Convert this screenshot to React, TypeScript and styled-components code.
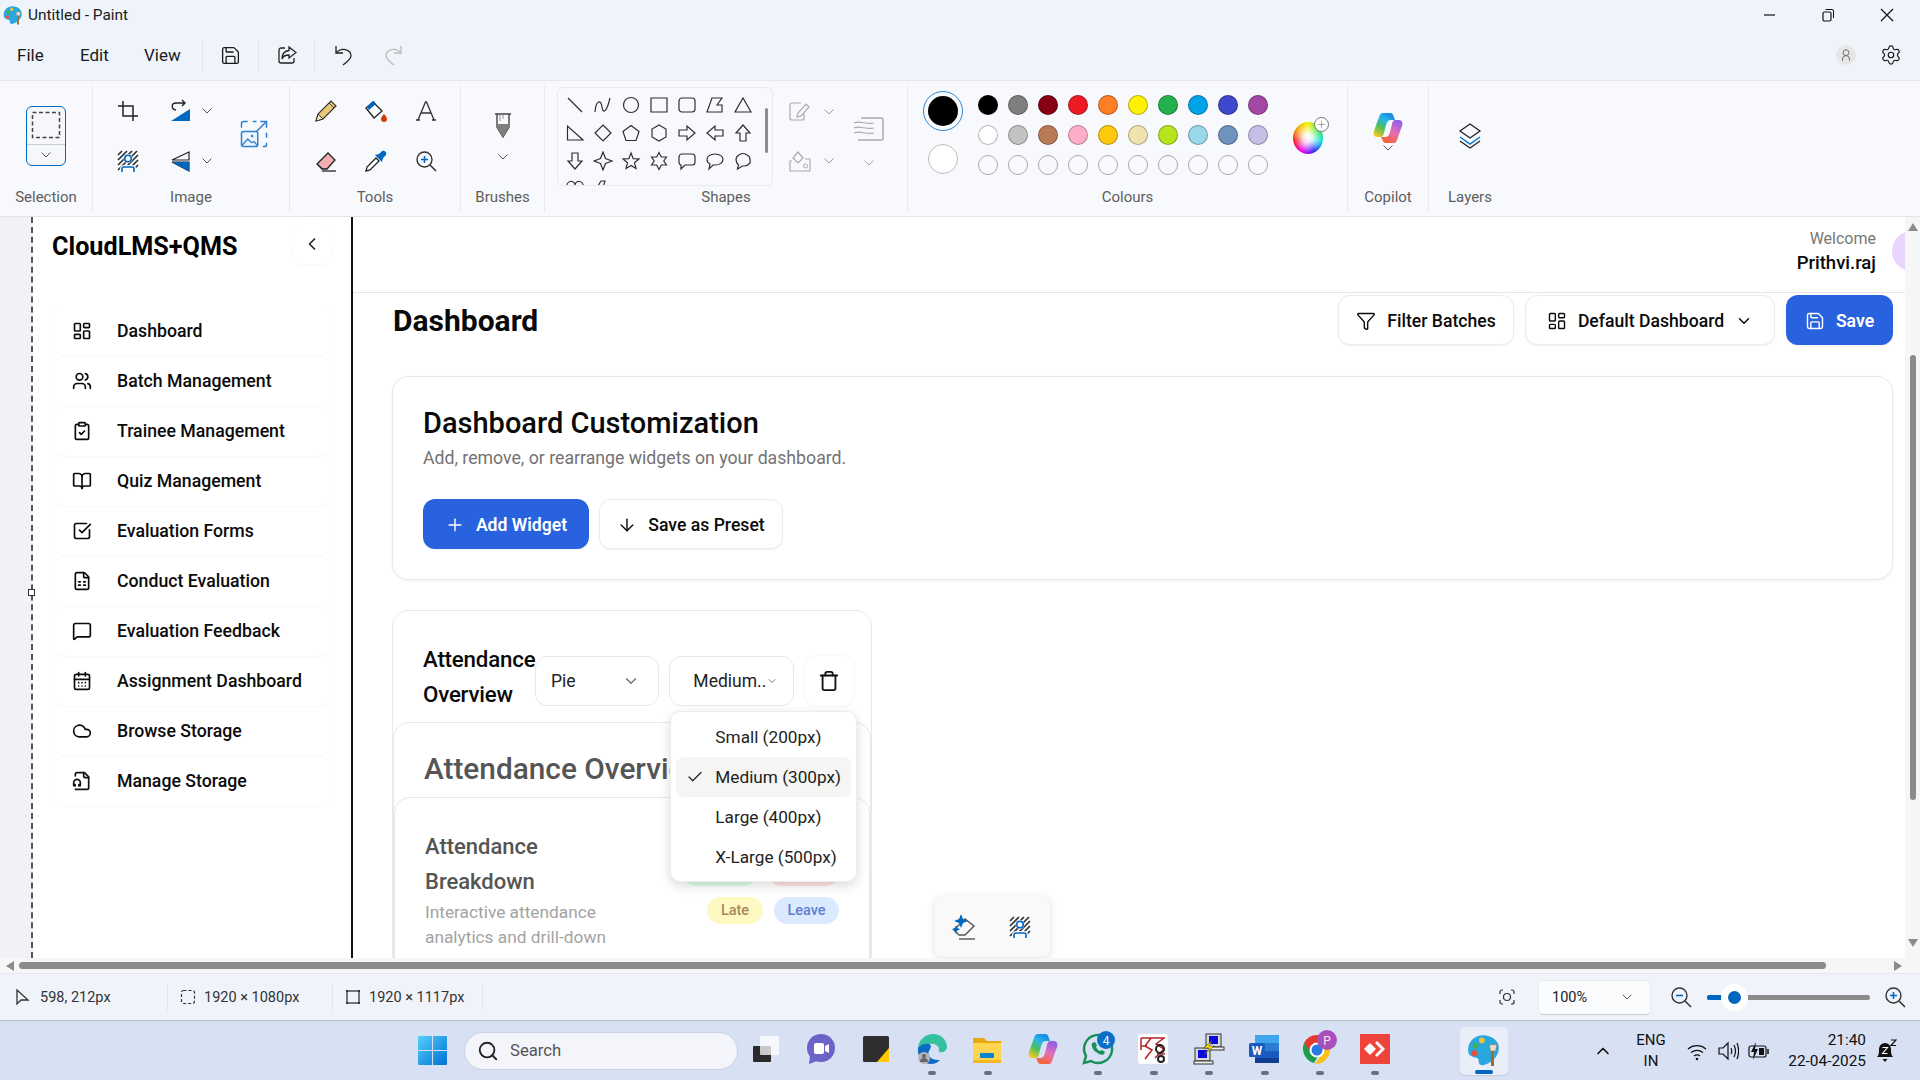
import React from 'react'
import styled, { createGlobalStyle } from 'styled-components'
import {
  ArrowDown, BookOpen, CalendarDays, Check, ChevronDown, ChevronLeft, ChevronUp, ClipboardCheck, Cloud,
  FileSpreadsheet, Funnel, LayoutDashboard, MessageSquare, Plus, Save, Search, Settings, SquareCheckBig, Trash, Users,
} from 'lucide-react'

const GlobalStyle = createGlobalStyle`
  html, body { margin: 0; padding: 0; width: 1920px; height: 1080px; overflow: hidden; background: #fff; }
  body { font-family: Roboto, "Noto Sans", sans-serif; color: #111; }
  * { box-sizing: border-box; }
  svg { display: block; flex-shrink: 0; }
`

/* ---------- window chrome ---------- */
const Window = styled.div`
  width: 1920px; height: 1080px; display: flex; flex-direction: column; overflow: hidden; background: #eff3fa;
`
const TitleBar = styled.div`
  height: 40px; flex-shrink: 0; display: flex; align-items: center; padding: 0 0 10px 3px; gap: 5px;
  font-size: 15.400px; color: #1a1a1a;
`
const WindowControls = styled.div`
  margin-left: auto; display: flex; align-items: center; padding-right: 25px; gap: 44px;
`
const MenuBar = styled.div`
  height: 40px; flex-shrink: 0; display: flex; align-items: center; padding: 0 18px 10px 17px;
  font-size: 17px; color: #1a1a1a;
`
const MenuItem = styled.span<{ $w: number }>`
  width: ${p => p.$w}px;
`
const MenuDivider = styled.div`
  width: 1px; height: 30px; background: #e0e3ea;
`
const MenuIcon = styled.div<{ $w: number }>`
  width: ${p => p.$w}px; display: flex; justify-content: center;
`
const MenuRight = styled.div`
  margin-left: auto; display: flex; align-items: center; gap: 24px;
`
const ProfileDot = styled.div`
  width: 20px; height: 20px; border-radius: 50%; background: #e6e6e6; display: flex; align-items: center; justify-content: center;
`

/* ---------- ribbon ---------- */
const Ribbon = styled.div`
  height: 137px; flex-shrink: 0; display: flex; background: #f8f9fd; border-top: 1px solid #e6e8ee; border-bottom: 1px solid #e3e5ea;
`
const Group = styled.div<{ $w: number; $last?: boolean }>`
  width: ${p => p.$w}px; height: 126px; margin-top: 5px; display: flex; flex-direction: column;
  border-right: ${p => (p.$last ? 'none' : '1px solid #e7e9ef')};
`
const GroupBody = styled.div<{ $top?: number; $left?: number; $center?: boolean }>`
  flex: 1; display: flex; padding-top: ${p => p.$top ?? 0}px; padding-left: ${p => p.$left ?? 0}px;
  ${p => (p.$center ? 'flex-direction: column; align-items: center;' : '')}
`
const GroupLabel = styled.div`
  height: 24px; text-align: center; font-size: 15px; color: #5e5e5e; line-height: 18px;
`
const SelectionTool = styled.div`
  width: 40px; height: 60px; margin-left: 26px; border: 1.5px solid #0067c0; border-radius: 6px; background: #f6f7fb;
  display: flex; flex-direction: column; align-items: center; padding-top: 4px;
`
const SelectionDivider = styled.div`
  width: 100%; height: 1px; background: #c8ccd4; margin: 5px 0 6px;
`
const ToolGrid = styled.div<{ $cols: string }>`
  display: grid; grid-template-columns: ${p => p.$cols}; grid-auto-rows: 50px;
`
const ToolCell = styled.div`
  display: flex; align-items: center; justify-content: center;
`
const SplitCell = styled.div`
  display: flex; align-items: center; padding-left: 20px; gap: 9px;
`
const ResizeTool = styled.div`
  margin: 33px 0 0 28px;
`
const BrushTool = styled.div`
  margin: 25px 0 14px;
`
const ShapesBox = styled.div`
  width: 216px; height: 99px; border: 1px solid #e8eaf0; border-radius: 6px; background: #f8f9fd; position: relative; overflow: hidden;
  display: grid; grid-template-columns: repeat(7, 28px); grid-auto-rows: 28px; padding: 3px 0 0 3px; align-content: start;
`
const ShapeCell = styled.div`
  display: flex; align-items: center; justify-content: center;
`
const ShapesThumb = styled.div`
  position: absolute; top: 20px; right: 4px; width: 3px; height: 45px; border-radius: 2px; background: #8b8b8b;
`
const OutlineColumn = styled.div`
  margin-left: 15px; display: flex; flex-direction: column; gap: 27px; padding-top: 14px;
`
const OutlineRow = styled.div`
  display: flex; align-items: center; gap: 11px; height: 22px;
`
const SizeColumn = styled.div`
  margin-left: 15px; width: 38px; display: flex; flex-direction: column; align-items: center; gap: 14px; padding-top: 26px;
`
const ActiveColumn = styled.div`
  width: 44px; margin: 0 8px 0 13px; display: flex; flex-direction: column; align-items: center; padding-top: 1px; gap: 13px;
`
const PrimaryRing = styled.div`
  width: 40px; height: 40px; border: 1.5px solid #2f86d6; border-radius: 50%; display: flex; align-items: center; justify-content: center;
`
const PrimaryDot = styled.div`
  width: 30px; height: 30px; border-radius: 50%; background: #000;
`
const SecondaryDot = styled.div`
  width: 30px; height: 30px; border-radius: 50%; background: #fff; border: 1.5px solid #bdbdbd;
`
const SwatchGrid = styled.div`
  display: grid; grid-template-columns: repeat(10, 30px); grid-auto-rows: 30px;
`
const SwatchCell = styled.div`
  display: flex; align-items: center; justify-content: center;
`
const Swatch = styled.div<{ $color?: string }>`
  width: 20px; height: 20px; border-radius: 50%; background: ${p => p.$color ?? 'transparent'};
  border: 1px solid ${p => (p.$color ? 'rgba(0,0,0,.28)' : '#a9a9a9')};
`
const WheelDisc = styled.div`
  position: relative; width: 30px; height: 32px; margin: 32px 0 0 20px; border-radius: 50%;
  background:
    radial-gradient(circle, #fff 0%, rgba(255,255,255,.85) 22%, rgba(255,255,255,0) 68%),
    conic-gradient(#f5f500, #2fe02f, #00e0e0, #2a2af5, #f000f0, #f51010, #f5a000, #f5f500);
`
const WheelPlus = styled.div`
  position: absolute; right: -6px; top: -5px; width: 15px; height: 15px; border-radius: 50%; background: #fff; border: 1px solid #777;
  display: flex; align-items: center; justify-content: center;
`

/* ---------- canvas ---------- */
const CanvasArea = styled.div`
  height: 741px; flex-shrink: 0; display: flex; position: relative; overflow: hidden; background: #fff;
`
const Gutter = styled.div`
  width: 33px; flex-shrink: 0; background: #f0f2f8; border-right: 2px dashed #555;
`
const Handle = styled.div`
  position: absolute; left: 28px; top: 372px; width: 7px; height: 7px; background: #fff; border: 1px solid #333;
`
const Sidebar = styled.aside`
  width: 320px; flex-shrink: 0; background: #fff; border-right: 2px solid #111; padding: 7px 19px 0 19px;
`
const BrandRow = styled.div`
  display: flex; align-items: center; justify-content: space-between; height: 40px; margin-bottom: 42px;
`
const Brand = styled.div`
  font-size: 25.200px; font-weight: 700; color: #000; padding-top: 4px;
`
const CollapseButton = styled.div`
  width: 40px; height: 40px; border-radius: 12px; display: flex; align-items: center; justify-content: center;
  box-shadow: 0 1px 3px rgba(0,0,0,.04); color: #222;
`
const NavItem = styled.div`
  height: 50px; border-radius: 14px; display: flex; align-items: center; padding-left: 20px; gap: 25px;
  font-size: 17.700px; font-weight: 500; color: #0b0b0b; box-shadow: 0 1px 2px rgba(0,0,0,.03), 0 0 1px rgba(0,0,0,.03);
`
const Main = styled.main`
  flex: 1; min-width: 0; overflow: hidden; background: #fff;
`
const Header = styled.header`
  height: 76px; border-bottom: 1px solid #e5e5e5; display: flex; align-items: center; justify-content: flex-end; gap: 16px;
  padding-bottom: 7px;
`
const Welcome = styled.div`
  text-align: right;
`
const WelcomeLabel = styled.div`
  font-size: 16px; color: #777; line-height: 24px;
`
const WelcomeName = styled.div`
  font-size: 18.500px; font-weight: 500; color: #0b0b0b; line-height: 25px;
`
const Avatar = styled.div`
  width: 40px; height: 40px; border-radius: 50%; background: #e9d5ff; margin-right: -27px; flex-shrink: 0;
`
const Content = styled.div`
  padding: 2px 12px 0 39px;
`
const PageHead = styled.div`
  display: flex; align-items: center; gap: 11px; height: 50px; margin-bottom: 31px;
`
const PageTitle = styled.h1`
  margin: 0 auto 0 1px; font-size: 30px; font-weight: 700; color: #0a0a0a;
`
const Button = styled.div<{ $primary?: boolean; $w: number }>`
  width: ${p => p.$w}px; height: 50px; border-radius: 12px; display: flex; align-items: center; justify-content: center; gap: 11px;
  padding-top: 1px; font-size: 17.600px; font-weight: ${p => (p.$primary ? 600 : 500)};
  background: ${p => (p.$primary ? '#2962de' : '#fff')}; color: ${p => (p.$primary ? '#fff' : '#0b0b0b')};
  border: ${p => (p.$primary ? 'none' : '1px solid #ececec')};
  box-shadow: 0 1px 2px rgba(0,0,0,.06);
`
const Card = styled.section`
  height: 204px; border: 1px solid #e8e8e8; border-radius: 16px; padding: 26px 30px 0; margin-bottom: 30px; box-shadow: 0 1px 3px rgba(0,0,0,.05);
`
const CardTitle = styled.h2`
  margin: 0; font-size: 29px; font-weight: 500; line-height: 40px; color: #0a0a0a;
`
const CardSub = styled.p`
  margin: 0 0 26px; font-size: 17.700px; line-height: 30px; color: #737373;
`
const ButtonRow = styled.div`
  display: flex; gap: 10px;
`
const Widget = styled.section`
  width: 480px; border: 1px solid #e8e8e8; border-radius: 16px;
`
const WidgetHead = styled.div`
  display: flex; align-items: center; padding: 31px 17px 0 30px; margin-bottom: 10px;
`
const WidgetTitle = styled.h3`
  margin: 0; width: 112px; font-size: 22.300px; font-weight: 500; line-height: 35px; color: #0a0a0a; letter-spacing: -.2px;
`
const SelectBox = styled.div<{ $center?: boolean }>`
  position: relative; width: 125px; height: 50px; border: 1px solid #e8e8e8; border-radius: 12px; margin: 8px 10px 0 0;
  display: flex; align-items: center; justify-content: space-between;
  padding: ${p => (p.$center ? '0 17px 0 23px' : '0 18px 0 15px')}; font-size: 17.500px; color: #222;
`
const Dropdown = styled.div`
  position: absolute; left: 0; top: 54px; width: 187px; height: 171px; z-index: 5; background: #fff; border: 1px solid #ececec; border-radius: 10px;
  box-shadow: 0 4px 12px rgba(0,0,0,.14); padding: 5px; color: #222;
`
const DropdownItem = styled.div<{ $active?: boolean }>`
  height: 40px; border-radius: 8px; display: flex; align-items: center; position: relative; padding-left: 39px; font-size: 17.200px;
  background: ${p => (p.$active ? '#f5f5f4' : 'transparent')};
`
const DropdownCheck = styled.span`
  position: absolute; left: 10px; top: 11px;
`
const TrashButton = styled.div`
  width: 50px; height: 50px; margin-top: 8px; border-radius: 12px; display: flex; align-items: center; justify-content: center; box-shadow: 0 0 2px rgba(0,0,0,.1);
`
const InnerCard = styled.div`
  border: 1px solid #e8e8e8; border-radius: 16px; padding: 26px 0 0 0; height: 400px;
`
const InnerTitle = styled.h3`
  margin: 0 0 8px 30px; font-size: 29.800px; font-weight: 500; line-height: 40px; color: #555;
`
const BreakdownCard = styled.div`
  border: 1px solid #e8e8e8; border-radius: 16px; padding: 31px 30px 0 30px; display: flex; justify-content: space-between; height: 300px;
`
const BreakdownCopy = styled.div`
  width: 210px;
`
const BreakdownTitle = styled.div`
  font-size: 22px; font-weight: 500; line-height: 35px; color: #555;
`
const BreakdownSub = styled.div`
  margin-top: 1px; font-size: 17.300px; line-height: 25px; color: #a3a3a3;
`
const PillWrap = styled.div`
  width: 165px; display: flex; flex-wrap: wrap; justify-content: flex-end; gap: 11px 11px; align-content: flex-start; padding-top: 30px;
`
const Pill = styled.span<{ $bg: string; $fg: string; $w: number }>`
  width: ${p => p.$w}px; height: 27px; border-radius: 14px; background: ${p => p.$bg}; color: ${p => p.$fg};
  display: flex; align-items: center; justify-content: center; font-size: 14.500px; font-weight: 500;
`
const FloatBar = styled.div`
  position: absolute; left: 935px; top: 679px; width: 115px; height: 61px; border-radius: 8px; background: #f9f9f9; z-index: 6;
  box-shadow: 0 2px 8px rgba(0,0,0,.13); display: flex; align-items: center; padding-left: 16px; gap: 29px;
`
const VBar = styled.div`
  width: 15px; flex-shrink: 0; background: #f6f6f6; display: flex; flex-direction: column; align-items: center; padding-top: 6px;
`
const VThumb = styled.div`
  width: 6px; height: 445px; border-radius: 3px; background: #8b8b8b; margin: 124px 0 139px;
`
const Triangle = styled.div<{ $dir: 'up' | 'down' | 'left' | 'right' }>`
  width: 0; height: 0; flex-shrink: 0;
  ${p => p.$dir === 'up' && 'border-left: 5px solid transparent; border-right: 5px solid transparent; border-bottom: 8px solid #8b8b8b;'}
  ${p => p.$dir === 'down' && 'border-left: 5px solid transparent; border-right: 5px solid transparent; border-top: 8px solid #8b8b8b;'}
  ${p => p.$dir === 'left' && 'border-top: 5px solid transparent; border-bottom: 5px solid transparent; border-right: 8px solid #8b8b8b;'}
  ${p => p.$dir === 'right' && 'border-top: 5px solid transparent; border-bottom: 5px solid transparent; border-left: 8px solid #8b8b8b;'}
`
const HBar = styled.div`
  height: 15px; flex-shrink: 0; background: #f6f6f6; display: flex; align-items: center; padding: 0 18px 0 6px;
`
const HThumb = styled.div`
  width: 1807px; height: 7px; border-radius: 4px; background: #8b8b8b; margin: 0 auto 0 5px;
`

/* ---------- status bar ---------- */
const StatusBar = styled.div`
  height: 48px; flex-shrink: 0; display: flex; align-items: center; padding: 0 14px 0 4px; background: #f0f3fa; border-top: 1px solid #e4e6ec;
  border-bottom: 1px solid #b4bccb; font-size: 14.500px; color: #333;
`
const StatusSeg = styled.div<{ $w: number }>`
  width: ${p => p.$w}px; height: 26px; display: flex; align-items: center; gap: 8px; padding-left: 12px; border-right: 1px solid #e0e3ea;
`
const StatusFirst = styled(StatusSeg)`
  gap: 10px; padding-left: 10px;
`
const StatusRight = styled.div`
  margin-left: auto; display: flex; align-items: center;
`
const ZoomCombo = styled.div`
  width: 113px; height: 35px; margin: 0 19px 0 21px; border-radius: 5px; background: #fbfcfe; border: 1px solid #e8eaf0; border-bottom-color: #c9ccd3;
  display: flex; align-items: center; justify-content: space-between; padding: 0 15px 0 13px; font-size: 14.500px; color: #222;
`
const Slider = styled.div`
  position: relative; width: 163px; height: 5px; margin: 0 14px 0 15px; border-radius: 3px; background: #8b8b8b;
`
const SliderFill = styled.div`
  position: absolute; left: 0; top: 0; height: 5px; width: 27px; border-radius: 3px; background: #0067c0;
`
const SliderThumb = styled.div`
  position: absolute; left: 14px; top: -11px; width: 27px; height: 27px; border-radius: 50%; background: #fff; display: flex; align-items: center; justify-content: center;
  &::after { content: ''; width: 13px; height: 13px; border-radius: 50%; background: #0067c0; }
`

/* ---------- taskbar ---------- */
const Taskbar = styled.div`
  flex: 1; min-height: 0; display: flex; align-items: center; background: #d8e1f3; padding-left: 418px;
`
const SearchBox = styled.div`
  width: 274px; height: 38px; margin-left: 17px; border-radius: 19px; background: #f3f5fb; border: 1px solid #c9d2e4;
  display: flex; align-items: center; padding-left: 12px; gap: 11px; font-size: 16.700px; color: #555;
`
const Tile = styled.div<{ $running?: boolean }>`
  width: 55.400px; height: 59px; position: relative; display: flex; align-items: center; justify-content: center; padding-bottom: 3px;
  &::after {
    content: ''; display: ${p => (p.$running ? 'block' : 'none')}; position: absolute; left: 24px; bottom: 5px; width: 8px; height: 4px; border-radius: 2px; background: #6b6f7a;
  }
`
const PaintTile = styled.div`
  width: 48px; height: 48px; margin-left: 57px; position: relative; border-radius: 5px; background: #e9eef9; box-shadow: 0 1px 1px rgba(0,0,0,.1);
  display: flex; align-items: center; justify-content: center; padding-bottom: 2px;
  &::after { content: ''; position: absolute; left: 15px; bottom: 1px; width: 18px; height: 4px; border-radius: 2px; background: #0067c0; }
`
const Tray = styled.div`
  margin-left: auto; display: flex; align-items: center; color: #111; padding-right: 23px;
`
const TrayLang = styled.div`
  width: 42px; margin: 0 14px 0 17px; text-align: center; font-size: 15px; line-height: 21px;
`
const TrayIcons = styled.div`
  display: flex; align-items: center; gap: 9px;
`
const Clock = styled.div`
  width: 91px; margin: 0 7px 0 5px; text-align: right; font-size: 15.400px; line-height: 21px;
`

/* ---------- drawings ---------- */
const Ico: React.FC<{ s?: number; vb?: number; children: React.ReactNode }> = ({ s = 24, vb, children }) => (
  <svg width={s} height={s} viewBox={`0 0 ${vb ?? s} ${vb ?? s}`} fill="none" stroke="none">{children}</svg>
)
const Chev: React.FC<{ c?: string }> = ({ c = '#555' }) => (
  <svg width="12" height="8" viewBox="0 0 12 8" fill="none"><path d="M1.500 1.500 6 6l4.500-4.500" stroke={c} strokeWidth="1" /></svg>
)
const CropIcon = () => <Ico s={22}><path d="M6 1v15h15M1 6h15v15" stroke="#222" strokeWidth="1.500" /></Ico>
const RotateIcon = () => (
  <Ico><path d="M3 22 22 10v12z" fill="#0067c0" /><path d="M8 11C3 10 3 4 8 4h9M14 1l3 3-3 3" stroke="#222" strokeWidth="1.400" /></Ico>
)
const FlipIcon = () => (
  <Ico><path d="M21 3 4 11h17zM4 13h17v9z" stroke="#222" strokeWidth="1.200" /><path d="M4 13h17v9z" fill="#0067c0" /></Ico>
)
const BackgroundIcon = () => (
  <Ico>
    <path d="M2 6l4-4M2 11l9-9M2 16 16 2M2 21 21 2M6 22 22 6M11 22l11-11M16 22l6-6" stroke="#333" strokeWidth="1.700" />
    <circle cx="12" cy="9.500" r="4.500" fill="#f8f9fd" />
    <path d="M4 23v-3a4 4 0 0 1 4-4h8a4 4 0 0 1 4 4v3z" fill="#f8f9fd" />
    <circle cx="12" cy="9.500" r="3.300" stroke="#0067c0" strokeWidth="1.600" />
    <path d="M6 23v-3a2 2 0 0 1 2-2h8a2 2 0 0 1 2 2v3" stroke="#0067c0" strokeWidth="1.600" />
  </Ico>
)
const ResizeIcon = () => (
  <Ico s={30} vb={24}>
    <path d="M2 7V3.500A1.500 1.500 0 0 1 3.500 2H7M11 2h3M22 19v1.500a1.500 1.500 0 0 1-1.500 1.500H19M22 11v4" stroke="#2f7fcf" strokeWidth="1.200" />
    <path d="M14 10 22 2M17 2h5v5" stroke="#2f7fcf" strokeWidth="1.200" />
    <rect x="2" y="10" width="13" height="12" rx="1.500" stroke="#2f7fcf" strokeWidth="1.200" fill="#eef5fc" />
    <path d="M2.500 21l4.500-5 3 3 2-1 2.500 3" stroke="#2f7fcf" strokeWidth="1" /><circle cx="10.500" cy="13.500" r="1" fill="#2f7fcf" />
  </Ico>
)
const PencilIcon = () => (
  <Ico><path d="M2 22 4 15 17 2l5 5L9 20z" fill="#edc878" stroke="#333" strokeWidth="1.200" /><path d="M2 22l2-7 5 5z" fill="#f7e5bd" stroke="#333" strokeWidth="1" /><path d="m15 4 5 5" stroke="#333" /></Ico>
)
const BucketIcon = () => (
  <Ico>
    <path d="M9 3 2 9l8 10 8-7z" fill="#fff" stroke="#222" strokeWidth="1.300" /><path d="M8 3 3 8l2 3 7-6-2-3z" fill="#0067c0" />
    <path d="M20 15s3 3 3 5a3 3 0 0 1-6 0c0-2 3-5 3-5z" fill="#d83b01" />
  </Ico>
)
const TextIcon = () => <Ico s={24}><path d="M4 21 11.500 3h1L20 21M7 14h10M2 21h4M18 21h4" stroke="#333" strokeWidth="1.300" /></Ico>
const EraserIcon = () => (
  <Ico><path d="m3 15 11-11 7 7-8 9H8z" fill="#f4aeb1" stroke="#222" strokeWidth="1.300" /><path d="M8 22h14" stroke="#222" strokeWidth="1.300" /><path d="M3 15l6 5" stroke="#222" /></Ico>
)
const PickerIcon = () => (
  <Ico><path d="m2 22 1-4 9-9 3 3-9 9z" fill="#fff" stroke="#222" strokeWidth="1.300" /><path d="m11 6 7 7 1-4 3-3a3 3 0 0 0-4-4l-3 3z" fill="#0067c0" /></Ico>
)
const ZoomGlyph: React.FC<{ plus?: boolean }> = ({ plus = true }) => (
  <Ico s={22}>
    <circle cx="9.500" cy="9.500" r="7.500" stroke="#333" strokeWidth="1.400" /><path d="m15 15 6 6" stroke="#333" strokeWidth="1.600" />
    <path d={plus ? 'M6 9.500h7M9.500 6v7' : 'M6 9.500h7'} stroke="#0067c0" strokeWidth="1.600" />
  </Ico>
)
const BrushIcon = () => (
  <Ico s={28}>
    <path d="M6 3h16M8 3v13l6 10 6-10V3" stroke="#444" strokeWidth="1.400" /><path d="M8 13h12v3l-6 10-6-10z" fill="#808080" /><path d="M11 4v6M14 4v4" stroke="#999" />
  </Ico>
)
const OutlineIcon = () => (
  <Ico><path d="M13 3H4a2 2 0 0 0-2 2v13a2 2 0 0 0 2 2h10a2 2 0 0 0 2-2v-4" stroke="#aaa" strokeWidth="1.200" /><path d="m9 17 1-4 8-9 3 3-8 9z" stroke="#aaa" strokeWidth="1.200" /></Ico>
)
const FillIcon = () => (
  <Ico><path d="M10 3 5 9l5 5 5-5z" stroke="#aaa" strokeWidth="1.200" /><path d="M4 12H2v10h20V10h-5" stroke="#aaa" strokeWidth="1.200" /><circle cx="17.500" cy="17" r="2" stroke="#aaa" /></Ico>
)
const SizeIcon = () => (
  <Ico s={32}><path d="M8 5h20a2 2 0 0 1 2 2v18a2 2 0 0 1-2 2H5" stroke="#aaa" strokeWidth="1.500" /><path d="M1 10c6-3 12 2 20 0M1 15c6-3 12 2 20 0M1 20c6-3 12 2 20 0" stroke="#aaa" strokeWidth="1.100" /></Ico>
)
const CopilotIcon: React.FC<{ s?: number }> = ({ s = 32 }) => (
  <svg width={s} height={s} viewBox="0 0 32 32">
    <defs>
      <linearGradient id="cpA" x1=".7" y1="0" x2=".2" y2="1"><stop offset="0" stopColor="#1687e0" /><stop offset=".3" stopColor="#25b5e8" /><stop offset=".62" stopColor="#4cc05c" /><stop offset="1" stopColor="#f9c821" /></linearGradient>
      <linearGradient id="cpB" x1=".7" y1="0" x2=".3" y2="1"><stop offset="0" stopColor="#8f5fe8" /><stop offset=".5" stopColor="#e56fb4" /><stop offset="1" stopColor="#f6632f" /></linearGradient>
    </defs>
    <path d="M11 1h7c2 0 3 1 3.500 3L23 8h-4c-3 0-4 2-5 5l-2 8c-.5 2-1 4-4 4H5c-3 0-4-3-3-6L7 5c1-3 2-4 4-4z" fill="url(#cpA)" />
    <path d="M21 31h-7c-2 0-3-1-3.500-3L9 25h4c3 0 4-2 5-5l2-8c.5-2 1-4 4-4h3c3 0 4 3 3 6l-5 14c-1 3-2 3-4 3z" fill="url(#cpB)" />
  </svg>
)
const LayersIcon = () => (
  <Ico s={28}>
    <path d="m14 1 10 7-10 7L4 8z" stroke="#222" strokeWidth="1.300" /><path d="m4 14 10 7 10-7" stroke="#0078d4" strokeWidth="1.500" /><path d="m4 18 10 7 10-7" stroke="#222" strokeWidth="1.300" />
  </Ico>
)
const PaintLogo: React.FC<{ s?: number }> = ({ s = 20 }) => (
  <svg width={s} height={s} viewBox="0 0 32 32">
    <path d="M15 2C7 2 1 8 1 16c0 5 3 6 6 7 3 0 4 1 4 4 0 2 2 4 5 3 7-2 14-8 14-16C30 7 23 2 15 2z" fill="#2ba7e0" />
    <circle cx="8" cy="12" r="2.700" fill="#3fb34f" /><circle cx="14" cy="7" r="2.700" fill="#f2c230" /><circle cx="7" cy="19" r="2.700" fill="#e5503c" />
    <path d="M21 11h7l-1 6h-5z" fill="#ece0c8" stroke="#777" strokeWidth=".6" /><path d="M23 17h2l.5 14h-3z" fill="#a5672a" />
  </svg>
)
const UserOutline = () => (
  <Ico s={14} vb={24}><circle cx="12" cy="8" r="5" stroke="#666" strokeWidth="1.600" /><path d="M6 22v-3a6 6 0 0 1 12 0v3" stroke="#666" strokeWidth="1.600" /></Ico>
)
const FileHeadphones = () => (
  <svg width="20" height="20" viewBox="0 0 24 24" fill="none" stroke="#111" strokeWidth="2" strokeLinecap="round" strokeLinejoin="round">
    <path d="M4 22h14a2 2 0 0 0 2-2V7l-5-5H6a2 2 0 0 0-2 2v2" /><path d="M14 2v4a2 2 0 0 0 2 2h4" /><path d="M2 17v-3a4 4 0 0 1 8 0v3" />
    <circle cx="9" cy="17" r="1" /><circle cx="3" cy="17" r="1" />
  </svg>
)
const shapePaths = [
  'M3 3 17 17', 'M2 17C3 5 8 4 9 12s5 4 8-9', 'M17.500 10a7.500 7.500 0 1 1-15 0 7.500 7.500 0 0 1 15 0z', 'M2 3h16v14H2z',
  'M5 3h10a3 3 0 0 1 3 3v8a3 3 0 0 1-3 3H5a3 3 0 0 1-3-3V6a3 3 0 0 1 3-3z', 'M2 17 7 3h10l-5 7h5v7z', 'M10 3l8 14H2z',
  'M2.500 3v14H18z', 'M10 2l8 8-8 8-8-8z', 'M10 2.500l8 6-3 9H5l-3-9z', 'M10 2l7 4v8l-7 4-7-4V6z', 'M2 7h8V3l8 7-8 7v-4H2z',
  'M18 7h-8V3l-8 7 8 7v-4h8z', 'M7 18v-8H3l7-8 7 8h-4v8z', 'M7 2v8H3l7 8 7-8h-4V2z', 'M10 1l2.500 6.500L19 10l-6.500 2.500L10 19l-2.500-6.500L1 10l6.500-2.500z',
  'M10 2l2.200 5.600L18 8l-4.500 3.800L15 17.500l-5-3.100-5 3.100 1.500-5.700L2 8l5.800-.4z', 'M10 1.500 12.300 6h5.200l-2.700 4 2.700 4h-5.200L10 18.500 7.700 14H2.500l2.700-4-2.700-4h5.200z',
  'M5 3h10a3 3 0 0 1 3 3v5a3 3 0 0 1-3 3H8l-4 4v-4a2 3 0 0 1-2-3V6a3 3 0 0 1 3-3z', 'M10 3c5 0 8 2.500 8 5.500S15 14 10 14H8l-4 4 1-5C3 12 2 10.500 2 8.500 2 5.500 5 3 10 3z',
  'M10 2.500c2 0 3 1 4 1.500s3 2 3 4 1 3-.5 4.500-3 2.500-5 2.500l-2 0-5 3 1-4C3.500 12 3 10.500 3 8.500s2-4 3-4.500 2-1.500 4-1.500z',
  'M10 18C4 13 2 10 2 7a4 4 0 0 1 8-1 4 4 0 0 1 8 1c0 3-2 6-8 11z', 'M8 2 3 10h5L6 18l9-10h-5l2-6z',
]
const ShapeIcon: React.FC<{ d: string }> = ({ d }) => (
  <svg width="20" height="20" viewBox="0 0 20 20" fill="none"><path d={d} stroke="#2f2f2f" strokeWidth="1.200" /></svg>
)

/* taskbar apps */
const WinLogo = () => (
  <svg width="29" height="29" viewBox="0 0 29 29">
    <defs><linearGradient id="winG" x1="0" y1="0" x2="1" y2="1"><stop offset="0" stopColor="#55d0fb" /><stop offset="1" stopColor="#0070d2" /></linearGradient></defs>
    <path d="M1 0h13v14H0V1a1 1 0 0 1 1-1zM15 0h13a1 1 0 0 1 1 1v13H15zM0 15h14v14H1a1 1 0 0 1-1-1zM15 15h14v13a1 1 0 0 1-1 1H15z" fill="url(#winG)" />
  </svg>
)
const TaskView = () => (
  <Ico s={32}><rect x="3" y="13" width="18" height="16" rx="1" fill="#2a2a2a" /><rect x="10" y="3" width="19" height="19" rx="1" fill="#fff" fillOpacity=".75" /></Ico>
)
const Meet = () => (
  <Ico s={32}><circle cx="16" cy="15" r="14" fill="#6c63c9" /><path d="M5 23 4 31l8-3z" fill="#6c63c9" /><rect x="9" y="10" width="10" height="11" rx="2" fill="#fff" /><path d="m20 13 4-2v9l-4-2z" fill="#fff" /></Ico>
)
const Sticky = () => (
  <Ico s={32}><rect x="3" y="3" width="26" height="26" rx="1.500" fill="#2e2e2e" /><path d="M29 15v14H17z" fill="#ffc800" /></Ico>
)
const Edge = () => (
  <Ico s={32}>
    <path d="M2 15C3 6 10 1 17 1c8 0 14 6 14 13 0 4-4 6-8 5 1-6-4-9-9-8-6 1-10 3-12 4z" fill="#35c1a0" />
    <path d="M2 15c3-4 8-5 11-4 3 1 2 4 0 7-2 3 1 10 11 9-3 3-6 4-9 4C7 31 1 24 2 15z" fill="#0b6cc4" />
    <circle cx="8" cy="25" r="6" fill="#b5b5b5" /><circle cx="8" cy="23" r="2" fill="#666" /><path d="M4 29a4 4 0 0 1 8 0z" fill="#666" />
  </Ico>
)
const Explorer = () => (
  <Ico s={32}><path d="M2 5h11l3 3h14v22H2z" fill="#e8a90f" /><path d="M2 10h28v20H2z" fill="#ffd451" /><rect x="9" y="20" width="14" height="5" rx="1" fill="#0a84d0" /><rect x="2" y="27" width="28" height="3" fill="#f5b81e" /></Ico>
)
const Whatsapp = () => (
  <svg width="36" height="36" viewBox="0 0 36 36" fill="none">
    <path d="M4 32l2-7a14 14 0 1 1 5 5z" stroke="#1b8f5a" strokeWidth="2.500" />
    <path d="M12 12c-1 3 1 7 4 9s6 4 8 2l1-2-3-2-2 1c-2-1-3-2-4-4l1-2-2-3z" fill="#1b8f5a" />
    <circle cx="26" cy="9" r="9" fill="#0a6fc9" />
    <text x="26" y="13.500" textAnchor="middle" fontSize="12" fontFamily="Roboto, sans-serif" fill="#fff">4</text>
  </svg>
)
const Wiring = () => (
  <Ico s={34}>
    <rect x="2" y="2" width="30" height="30" rx="3" fill="#fff" />
    <path d="M5 6h24M5 6v12M15 6l-6 8 7 4-7 9M28 6l-8 6 8 5-9 9M5 14h6M21 22h8" stroke="#b4232a" strokeWidth="1.500" />
    <circle cx="24" cy="17" r="4" stroke="#222" strokeWidth="2" /><circle cx="25" cy="27" r="3" stroke="#222" strokeWidth="2" />
  </Ico>
)
const Putty = () => (
  <Ico s={34}>
    <rect x="14" y="2" width="15" height="13" fill="#d8d8d8" stroke="#333" /><rect x="17" y="4" width="9" height="8" fill="#0a0ae0" /><rect x="13" y="15" width="19" height="3" fill="#eee" stroke="#333" />
    <rect x="3" y="16" width="15" height="13" fill="#d8d8d8" stroke="#333" /><rect x="6" y="18" width="9" height="8" fill="#0a0ae0" /><rect x="2" y="29" width="19" height="3" fill="#eee" stroke="#333" />
    <path d="M20 8 12 16h5l-5 7 10-9h-5z" fill="#ffe500" stroke="#333" strokeWidth=".6" />
  </Ico>
)
const Word = () => (
  <svg width="32" height="32" viewBox="0 0 32 32">
    <rect x="7" y="2" width="24" height="8" fill="#41a5ee" /><rect x="7" y="10" width="24" height="8" fill="#2b7cd3" /><rect x="7" y="18" width="24" height="7" fill="#185abd" /><rect x="7" y="25" width="24" height="5" fill="#103f91" />
    <rect x="1" y="10" width="16" height="14" rx="1.500" fill="#185abd" />
    <text x="9" y="21.500" textAnchor="middle" fontSize="12" fontWeight="700" fontFamily="Roboto, sans-serif" fill="#fff">W</text>
  </svg>
)
const Chrome = () => (
  <svg width="38" height="38" viewBox="0 0 38 38">
    <path d="M16 5A15 15 0 0 0 3 13l7 12 6-9h13a15 15 0 0 0-13-11z" fill="#e33b2e" /><path d="M3 13A15 15 0 0 0 13 33l6-10-9-1z" fill="#1b9e4b" />
    <path d="M29 16H16l5 8-7 10a15 15 0 0 0 15-18z" fill="#fbc116" /><circle cx="16" cy="20" r="7.500" fill="#fff" /><circle cx="16" cy="20" r="5.500" fill="#2a7ae4" />
    <circle cx="26" cy="10" r="10" fill="#a94fbc" />
    <text x="26" y="14.500" textAnchor="middle" fontSize="12" fontFamily="Roboto, sans-serif" fill="#f3e6f6">P</text>
  </svg>
)
const AnyDesk = () => (
  <Ico s={30}><rect width="30" height="30" fill="#ef443b" /><path d="M10 9l6 6-6 6-6-6z" fill="#fff" /><path d="m17 7 8 8-8 8-2-2 6-6-6-6z" fill="#fff" /></Ico>
)
const Wifi = () => (
  <Ico s={22}><path d="M2 9a14 14 0 0 1 18 0M5 12.500a10 10 0 0 1 12 0M8 16a5 5 0 0 1 6 0" stroke="#111" strokeWidth="1.300" /><circle cx="11" cy="19" r="1.300" fill="#111" /></Ico>
)
const Volume = () => (
  <Ico s={22}><path d="M2 8h4l5-5v16l-5-5H2z" stroke="#111" strokeWidth="1.200" /><path d="M14 8c1 2 1 4 0 6M17 5c2 4 2 8 0 12M20 3c2 5 2 11 0 16" stroke="#111" strokeWidth="1.200" /></Ico>
)
const Battery = () => (
  <Ico s={22}><rect x="1" y="6" width="17" height="11" rx="2" stroke="#111" strokeWidth="1.200" /><path d="M20 9v5" stroke="#111" strokeWidth="1.500" /><path d="M11 8h5v7h-5zM3 12l5-10-1 7h3L5 20l1-8z" fill="#111" /></Ico>
)
const BellZ = () => (
  <Ico s={24}>
    <path d="M4 18c2-2 2-4 2-8a6 6 0 0 1 12 0c0 4 0 6 2 8z" fill="#111" /><path d="M9.500 20h5L12 23z" fill="#111" />
    <path d="M9.500 8.500h5l-5 6h5" stroke="#fff" strokeWidth="1.100" /><path d="M18 1h5l-5 5.500h5" stroke="#111" strokeWidth="1.200" />
  </Ico>
)

/* ---------- data ---------- */
const navItems: { label: string; icon: React.ReactNode }[] = [
  { label: 'Dashboard', icon: <LayoutDashboard size={20} /> },
  { label: 'Batch Management', icon: <Users size={20} /> },
  { label: 'Trainee Management', icon: <ClipboardCheck size={20} /> },
  { label: 'Quiz Management', icon: <BookOpen size={20} /> },
  { label: 'Evaluation Forms', icon: <SquareCheckBig size={20} /> },
  { label: 'Conduct Evaluation', icon: <FileSpreadsheet size={20} /> },
  { label: 'Evaluation Feedback', icon: <MessageSquare size={20} /> },
  { label: 'Assignment Dashboard', icon: <CalendarDays size={20} /> },
  { label: 'Browse Storage', icon: <Cloud size={20} /> },
  { label: 'Manage Storage', icon: <FileHeadphones /> },
]
const swatches: (string | undefined)[] = [
  '#000000', '#7f7f7f', '#880015', '#ed1c24', '#ff7f27', '#fff200', '#22b14c', '#00a2e8', '#3f48cc', '#a349a4',
  '#ffffff', '#c3c3c3', '#b97a57', '#ffaec9', '#ffc90e', '#efe4b0', '#b5e61d', '#99d9ea', '#7092be', '#c8bfe7',
  ...Array<undefined>(10).fill(undefined),
]
const sizes = ['Small (200px)', 'Medium (300px)', 'Large (400px)', 'X-Large (500px)']
const apps: { node: React.ReactNode; running?: boolean }[] = [
  { node: <TaskView /> }, { node: <Meet /> }, { node: <Sticky /> }, { node: <Edge />, running: true },
  { node: <Explorer />, running: true }, { node: <CopilotIcon /> }, { node: <Whatsapp />, running: true },
  { node: <Wiring />, running: true }, { node: <Putty />, running: true }, { node: <Word />, running: true },
  { node: <Chrome />, running: true }, { node: <AnyDesk />, running: true },
]

const App = () => {
  return (
    <Window>
      <GlobalStyle />
      <TitleBar>
        <PaintLogo />
        Untitled - Paint
        <WindowControls>
          <svg width="14" height="14" viewBox="0 0 14 14"><path d="M1 7h11" stroke="#111" strokeWidth="1.200" /></svg>
          <svg width="14" height="14" viewBox="0 0 14 14" fill="none"><rect x="2" y="4" width="8" height="9" rx="1.500" stroke="#111" strokeWidth="1.200" /><path d="M4.500 1.500H11a1.500 1.500 0 0 1 1.500 1.500v7" stroke="#111" /></svg>
          <svg width="16" height="16" viewBox="0 0 16 16"><path d="m2 2 12 12M14 2 2 14" stroke="#111" strokeWidth="1.200" /></svg>
        </WindowControls>
      </TitleBar>

      <MenuBar>
        <MenuItem $w={63}>File</MenuItem>
        <MenuItem $w={64}>Edit</MenuItem>
        <MenuItem $w={58}>View</MenuItem>
        <MenuDivider />
        <MenuIcon $w={55}><Save size={21} strokeWidth={1.500} /></MenuIcon>
        <MenuDivider />
        <MenuIcon $w={55}>
          <svg width="20" height="20" viewBox="0 0 20 20" fill="none"><path d="M8 3H4a2 2 0 0 0-2 2v11a2 2 0 0 0 2 2h11a2 2 0 0 0 2-2v-3" stroke="#222" strokeWidth="1.300" /><path d="M12 2l7 5.500-7 5.500V10c-4 0-6 1-7 4 0-5 2-8 7-8.500z" stroke="#222" strokeWidth="1.300" /></svg>
        </MenuIcon>
        <MenuDivider />
        <MenuIcon $w={58}>
          <svg width="20" height="22" viewBox="0 0 20 22" fill="none"><path d="M2 2v7h7" stroke="#222" strokeWidth="1.300" /><path d="M2 9c5-6 15-4 15 3 0 3-4 6-8 9" stroke="#222" strokeWidth="1.300" /></svg>
        </MenuIcon>
        <MenuIcon $w={40}>
          <svg width="20" height="22" viewBox="0 0 20 22" fill="none"><path d="M18 2v7h-7" stroke="#bbb" strokeWidth="1.300" /><path d="M18 9C13 3 3 5 3 12c0 3 4 6 8 9" stroke="#bbb" strokeWidth="1.300" /></svg>
        </MenuIcon>
        <MenuRight>
          <ProfileDot><UserOutline /></ProfileDot>
          <Settings size={22} strokeWidth={1.300} />
        </MenuRight>
      </MenuBar>

      <Ribbon>
        <Group $w={93}>
          <GroupBody $top={20}>
            <SelectionTool>
              <svg width="30" height="28" viewBox="0 0 30 28" fill="none"><rect x="1.500" y="1.500" width="27" height="25" stroke="#444" strokeWidth="1.500" strokeDasharray="4 2.500" /></svg>
              <SelectionDivider />
              <Chev />
            </SelectionTool>
          </GroupBody>
          <GroupLabel>Selection</GroupLabel>
        </Group>
        <Group $w={197}>
          <GroupBody $left={15}>
            <ToolGrid $cols="40px 63px">
              <ToolCell><CropIcon /></ToolCell>
              <SplitCell><RotateIcon /><Chev /></SplitCell>
              <ToolCell><BackgroundIcon /></ToolCell>
              <SplitCell><FlipIcon /><Chev /></SplitCell>
            </ToolGrid>
            <ResizeTool><ResizeIcon /></ResizeTool>
          </GroupBody>
          <GroupLabel>Image</GroupLabel>
        </Group>
        <Group $w={171}>
          <GroupBody $left={11}>
            <ToolGrid $cols="50px 50px 50px">
              <ToolCell><PencilIcon /></ToolCell>
              <ToolCell><BucketIcon /></ToolCell>
              <ToolCell><TextIcon /></ToolCell>
              <ToolCell><EraserIcon /></ToolCell>
              <ToolCell><PickerIcon /></ToolCell>
              <ToolCell><ZoomGlyph /></ToolCell>
            </ToolGrid>
          </GroupBody>
          <GroupLabel>Tools</GroupLabel>
        </Group>
        <Group $w={84}>
          <GroupBody $center>
            <BrushTool><BrushIcon /></BrushTool>
            <Chev />
          </GroupBody>
          <GroupLabel>Brushes</GroupLabel>
        </Group>
        <Group $w={363}>
          <GroupBody $left={12} $top={1}>
            <ShapesBox>
              {shapePaths.map(d => <ShapeCell key={d}><ShapeIcon d={d} /></ShapeCell>)}
              <ShapesThumb />
            </ShapesBox>
            <OutlineColumn>
              <OutlineRow><OutlineIcon /><Chev c="#999" /></OutlineRow>
              <OutlineRow><FillIcon /><Chev c="#999" /></OutlineRow>
            </OutlineColumn>
            <SizeColumn>
              <SizeIcon />
              <Chev c="#aaa" />
            </SizeColumn>
          </GroupBody>
          <GroupLabel>Shapes</GroupLabel>
        </Group>
        <Group $w={440}>
          <GroupBody $top={4}>
            <ActiveColumn>
              <PrimaryRing><PrimaryDot /></PrimaryRing>
              <SecondaryDot />
            </ActiveColumn>
            <SwatchGrid>
              {swatches.map((c, i) => <SwatchCell key={i}><Swatch $color={c} /></SwatchCell>)}
            </SwatchGrid>
            <WheelDisc>
              <WheelPlus><Plus size={11} strokeWidth={1.200} color="#666" /></WheelPlus>
            </WheelDisc>
          </GroupBody>
          <GroupLabel>Colours</GroupLabel>
        </Group>
        <Group $w={81}>
          <GroupBody $center $top={26}>
            <CopilotIcon />
            <Chev />
          </GroupBody>
          <GroupLabel>Copilot</GroupLabel>
        </Group>
        <Group $w={82} $last>
          <GroupBody $center $top={37}><LayersIcon /></GroupBody>
          <GroupLabel>Layers</GroupLabel>
        </Group>
      </Ribbon>

      <CanvasArea>
        <Gutter />
        <Handle />
        <Sidebar>
          <BrandRow>
            <Brand>CloudLMS+QMS</Brand>
            <CollapseButton><ChevronLeft size={20} strokeWidth={2} /></CollapseButton>
          </BrandRow>
          {navItems.map(item => (
            <NavItem key={item.label}>{item.icon}{item.label}</NavItem>
          ))}
        </Sidebar>
        <Main>
          <Header>
            <Welcome>
              <WelcomeLabel>Welcome</WelcomeLabel>
              <WelcomeName>Prithvi.raj</WelcomeName>
            </Welcome>
            <Avatar />
          </Header>
          <Content>
            <PageHead>
              <PageTitle>Dashboard</PageTitle>
              <Button $w={176}><Funnel size={20} strokeWidth={1.700} />Filter Batches</Button>
              <Button $w={250}><LayoutDashboard size={20} strokeWidth={1.700} />Default Dashboard<ChevronDown size={18} /></Button>
              <Button $primary $w={107}><Save size={20} strokeWidth={1.700} />Save</Button>
            </PageHead>
            <Card>
              <CardTitle>Dashboard Customization</CardTitle>
              <CardSub>Add, remove, or rearrange widgets on your dashboard.</CardSub>
              <ButtonRow>
                <Button $primary $w={166}><Plus size={20} strokeWidth={1.700} />Add Widget</Button>
                <Button $w={184}><ArrowDown size={20} strokeWidth={1.700} />Save as Preset</Button>
              </ButtonRow>
            </Card>
            <Widget>
              <WidgetHead>
                <WidgetTitle>Attendance Overview</WidgetTitle>
                <SelectBox>Pie<ChevronDown size={18} color="#777" /></SelectBox>
                <SelectBox $center>
                  Medium..<ChevronDown size={12} color="#777" />
                  <Dropdown>
                    {sizes.map((s, i) => (
                      <DropdownItem key={s} $active={i === 1}>
                        {i === 1 && <DropdownCheck><Check size={18} strokeWidth={1.600} /></DropdownCheck>}
                        {s}
                      </DropdownItem>
                    ))}
                  </Dropdown>
                </SelectBox>
                <TrashButton><Trash size={22} strokeWidth={2} /></TrashButton>
              </WidgetHead>
              <InnerCard>
                <InnerTitle>Attendance Overview</InnerTitle>
                <BreakdownCard>
                  <BreakdownCopy>
                    <BreakdownTitle>Attendance Breakdown</BreakdownTitle>
                    <BreakdownSub>Interactive attendance analytics and drill-down</BreakdownSub>
                  </BreakdownCopy>
                  <PillWrap>
                    <Pill $w={75} $bg="#dcfce7" $fg="#5a9a72">Present</Pill>
                    <Pill $w={71} $bg="#fee2e2" $fg="#c47070">Absent</Pill>
                    <Pill $w={56} $bg="#fef9c3" $fg="#a68a5a">Late</Pill>
                    <Pill $w={65} $bg="#dbeafe" $fg="#5f7fd0">Leave</Pill>
                  </PillWrap>
                </BreakdownCard>
              </InnerCard>
            </Widget>
          </Content>
        </Main>
        <VBar>
          <Triangle $dir="up" />
          <VThumb />
          <Triangle $dir="down" />
        </VBar>
        <FloatBar>
          <Ico s={28}>
            <path d="M3 17 14 6l9 7-9 9H8z" fill="#f9f9f9" stroke="#555" strokeWidth="1.400" /><path d="M8 26h16" stroke="#555" strokeWidth="1.400" />
            <path d="M10 1l2 5 5 2-5 2-2 5-2-5-5-2 5-2zM5 12l1.200 3 3 1.200-3 1.200L5 21l-1.200-3.600-3-1.200 3-1.200z" fill="#0067c0" />
          </Ico>
          <BackgroundIcon />
        </FloatBar>
      </CanvasArea>

      <HBar>
        <Triangle $dir="left" />
        <HThumb />
        <Triangle $dir="right" />
      </HBar>

      <StatusBar>
        <StatusFirst $w={164}>
          <svg width="16" height="18" viewBox="0 0 16 18" fill="none"><path d="M3 2v14l4-4h7z" stroke="#333" strokeWidth="1.300" /></svg>
          598, 212px
        </StatusFirst>
        <StatusSeg $w={165}>
          <svg width="16" height="16" viewBox="0 0 16 16" fill="none"><rect x="1.500" y="1.500" width="13" height="13" rx="2" stroke="#333" strokeWidth="1.200" strokeDasharray="3 2" /></svg>
          1920 × 1080px
        </StatusSeg>
        <StatusSeg $w={150}>
          <svg width="16" height="16" viewBox="0 0 16 16" fill="none"><rect x="2" y="2" width="12" height="12" stroke="#333" strokeWidth="1.300" /><path d="M1 2h2M13 2h2M1 14h2M13 14h2" stroke="#333" strokeWidth="2" /></svg>
          1920 × 1117px
        </StatusSeg>
        <StatusRight>
          <svg width="20" height="20" viewBox="0 0 20 20" fill="none"><path d="M3 7V5a2 2 0 0 1 2-2h1M14 3h1a2 2 0 0 1 2 2v2M17 13v2a2 2 0 0 1-2 2h-1M6 17H5a2 2 0 0 1-2-2v-2" stroke="#333" strokeWidth="1.200" /><circle cx="10" cy="10" r="3.500" stroke="#333" strokeWidth="1.200" /></svg>
          <ZoomCombo>100%<ChevronDown size={16} strokeWidth={1.300} color="#444" /></ZoomCombo>
          <ZoomGlyph plus={false} />
          <Slider><SliderFill /><SliderThumb /></Slider>
          <ZoomGlyph />
        </StatusRight>
      </StatusBar>

      <Taskbar>
        <WinLogo />
        <SearchBox><Search size={22} strokeWidth={2} color="#222" />Search</SearchBox>
        {apps.map((a, i) => <Tile key={i} $running={a.running}>{a.node}</Tile>)}
        <PaintTile><PaintLogo s={34} /></PaintTile>
        <Tray>
          <ChevronUp size={20} strokeWidth={2} />
          <TrayLang>ENG<br />IN</TrayLang>
          <TrayIcons><Wifi /><Volume /><Battery /></TrayIcons>
          <Clock>21:40<br />22-04-2025</Clock>
          <BellZ />
        </Tray>
      </Taskbar>
    </Window>
  )
}

export default App
